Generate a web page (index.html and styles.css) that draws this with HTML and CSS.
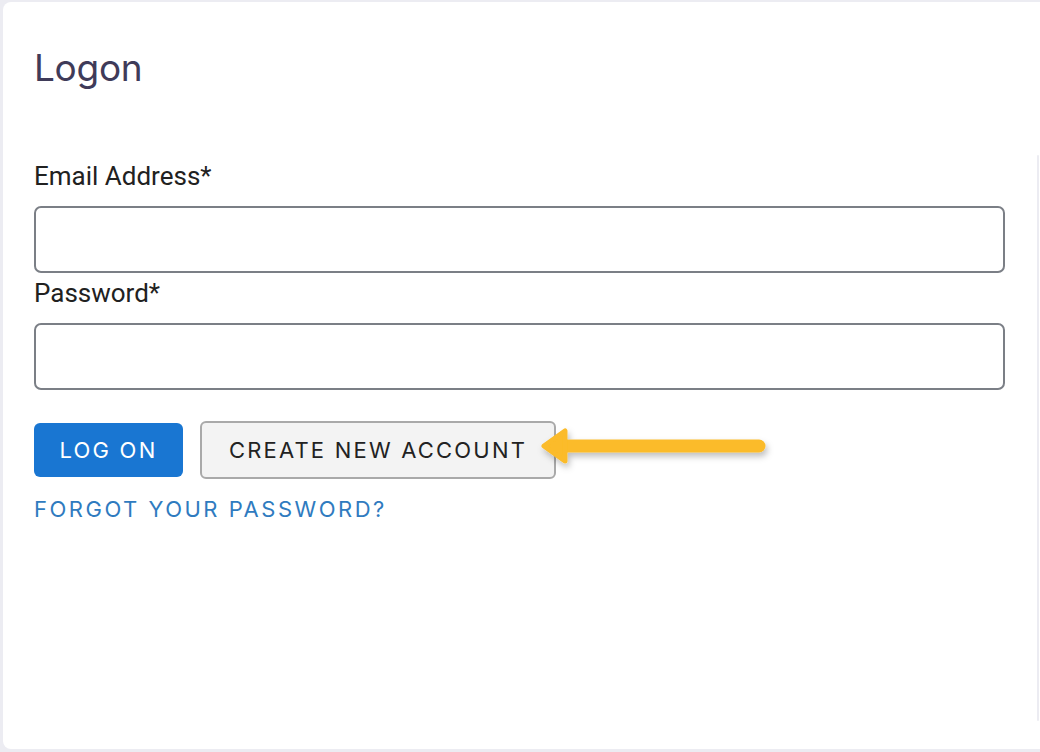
FILE: index.html
```html
<!DOCTYPE html>
<html>
<head>
<meta charset="utf-8">
<link rel="stylesheet" href="styles.css">
</head>
<body>
<div class="page">
  <div class="card">
    <h1 class="title">Logon</h1>
    <form class="form">
      <label class="label" for="email">Email Address*</label>
      <input class="input" id="email" type="text">
      <label class="label label-pw" for="pw">Password*</label>
      <input class="input" id="pw" type="password">
      <div class="actions">
        <button type="button" class="btn btn-primary">LOG ON</button>
        <button type="button" class="btn btn-secondary">CREATE NEW ACCOUNT</button>
        <svg class="arrow" width="250" height="60" viewBox="0 0 250 60">
          <defs>
            <filter id="sh" x="-20%" y="-50%" width="140%" height="200%">
              <feDropShadow dx="2" dy="4" stdDeviation="3" flood-color="#000" flood-opacity="0.25"/>
            </filter>
          </defs>
          <g filter="url(#sh)" fill="#fbbb29" stroke="#fbbb29" stroke-linejoin="round" stroke-linecap="round">
            <line x1="30" y1="25" x2="227" y2="25" stroke-width="13"/>
            <path d="M12 25 L33 10 L33 40 Z" stroke-width="5"/>
          </g>
        </svg>
      </div>
      <a class="forgot" href="#">FORGOT YOUR PASSWORD?</a>
    </form>
    <div class="edge"></div>
  </div>
</div>
</body>
</html>
```
FILE: styles.css
```css
html, body {
  margin: 0;
  padding: 0;
}
body {
  background: #ececf2;
  width: 1040px;
  height: 752px;
  overflow: hidden;
}
.page {
  padding: 2px 0 3px 3px;
}
.card {
  position: relative;
  background: #ffffff;
  height: 747px;
  border-radius: 8px 0 0 8px;
  box-sizing: border-box;
  padding: 44px 35px 0 31px;
}
.title {
  margin: 0;
  font-family: "Inter", "Open Sans", sans-serif;
  font-weight: 400;
  font-size: 37px;
  line-height: 44px;
  color: #3f3b59;
  letter-spacing: -0.3px;
}
.form {
  display: flex;
  flex-direction: column;
  margin-top: 71px;
}
.label {
  font-family: "Roboto", "Liberation Sans", sans-serif;
  font-size: 26px;
  line-height: 30px;
  color: #212121;
  margin-bottom: 15px;
}
.label-pw {
  margin-top: 5px;
}
.input {
  height: 67px;
  box-sizing: border-box;
  border: 2px solid #7b7f86;
  border-radius: 7px;
  margin: 0;
  outline: none;
  background: #fff;
  width: 971px;
}
.actions {
  position: relative;
  display: flex;
  align-items: center;
  gap: 17px;
  margin-top: 31px;
}
.btn {
  font-family: "Inter", "Open Sans", sans-serif;
  font-size: 22px;
  letter-spacing: 2.2px;
  font-weight: 400;
  border-radius: 6px;
  cursor: pointer;
  margin: 0;
}
.btn-primary {
  background: #1976d2;
  color: #ffffff;
  border: none;
  height: 54px;
  padding: 0 20px;
  width: 149px;
}
.btn-secondary {
  background: #f3f3f3;
  color: #222222;
  border: 2px solid #a9a9a9;
  height: 58px;
  width: 356px;
  padding: 0;
}
.arrow {
  position: absolute;
  left: 498px;
  top: 0px;
}
.forgot {
  margin-top: 16px;
  font-family: "Inter", "Open Sans", sans-serif;
  font-size: 22px;
  letter-spacing: 2.5px;
  color: #2f7bbf;
  text-decoration: none;
  line-height: 28px;
  align-self: flex-start;
}
.edge {
  position: absolute;
  right: 1px;
  top: 153px;
  width: 2px;
  height: 566px;
  background: #ececf2;
  border-radius: 2px;
}
```
